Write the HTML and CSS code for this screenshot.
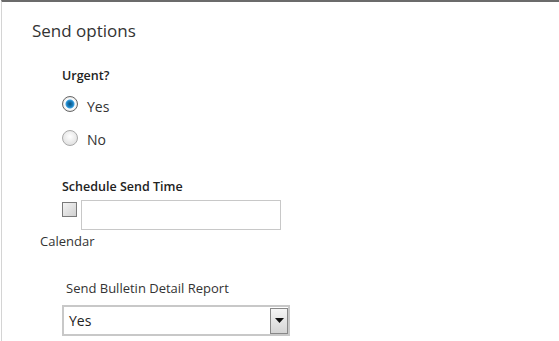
FILE: index.html
```html
<!DOCTYPE html>
<html lang="en">
<head>
  <meta charset="UTF-8" />
  <title>Send options</title>
  <link rel="stylesheet" href="styles.css">
</head>
<body>
  <div class="panel">
    <h2 class="title">Send options</h2>

    <div class="group urgent">
      <div class="label">Urgent?</div>
      <label class="radio"><span class="dot on"></span>Yes</label>
      <label class="radio"><span class="dot"></span>No</label>
    </div>

    <div class="group schedule">
      <div class="label">Schedule Send Time</div>
      <div class="row">
        <span class="check"></span>
        <span class="textbox"></span>
      </div>
    </div>
    <div class="calendar">Calendar</div>

    <div class="group report">
      <div class="plain">Send Bulletin Detail Report</div>
      <div class="select">
        <span class="value">Yes</span>
        <span class="arrow"><svg width="9" height="5" viewBox="0 0 9 5"><path d="M0 0h9L4.5 5z" fill="#111"/></svg></span>
      </div>
    </div>
  </div>
</body>
</html>
```

FILE: styles.css
```css
body {
  margin: 0;
  font-family: 'Open Sans', sans-serif;
  color: #333;
  background: #fff;
}
.panel {
  height: 339px;
  border-top: 2px solid #6b6b6b;
  border-left: 1px solid #d4d4d4;
  margin-left: 1px;
  padding-left: 30px;
}
.title {
  margin: 0;
  padding-top: 17px;
  font-size: 17px;
  font-weight: 400;
  line-height: 24px;
  color: #333;
}
.group { padding-left: 30px; }
.urgent { padding-top: 24px; }
.label {
  font-size: 12.5px;
  font-weight: 600;
  line-height: 18px;
  color: #222;
}
.radio {
  display: flex;
  align-items: center;
  font-size: 14px;
  line-height: 18px;
  height: 33px;
}
.radio:first-of-type { margin-top: 5px; }
.dot {
  width: 14px;
  height: 14px;
  border-radius: 50%;
  border: 1px solid #a9a9a9;
  background: radial-gradient(circle at 50% 40%, #fff, #d8d8d8);
  margin: -6px 9px 0 0;
  box-sizing: content-box;
}
.dot.on {
  background: radial-gradient(circle, #0a4f7a 0, #1a7fc0 3px, #3aa0e0 4px, #fff 5px, #e6e6e6 7px);
  border-color: #666;
}
.radio + .radio .dot { margin-top: -4px; }
.schedule { padding-top: 22px; }
.row {
  display: flex;
  align-items: flex-start;
  margin-top: 4px;
}
.check {
  width: 13px;
  height: 13px;
  border: 1px solid #7a7a7a;
  background: linear-gradient(135deg, #f4f4f4, #d0d0d0);
  margin: 2px 4px 0 0;
}
.textbox {
  width: 198px;
  height: 28px;
  border: 1px solid #c8c8c8;
}
.calendar {
  font-size: 13px;
  line-height: 18px;
  margin-top: 2px;
  padding-left: 8px;
  color: #333;
}
.report { padding-top: 29px; }
.plain {
  font-size: 13px;
  line-height: 18px;
  padding-left: 4px;
  color: #333;
}
.select {
  display: flex;
  align-items: center;
  width: 219px;
  height: 27px;
  margin-top: 8px;
  border: 2px solid #c8c8c8;
  padding-left: 5px;
}
.value {
  flex: 1;
  font-size: 14px;
  color: #222;
}
.arrow {
  width: 16px;
  height: 24px;
  border: 1px solid #888;
  background: linear-gradient(#f6f6f6, #d4d4d4);
  display: flex;
  align-items: center;
  justify-content: center;
}
```
